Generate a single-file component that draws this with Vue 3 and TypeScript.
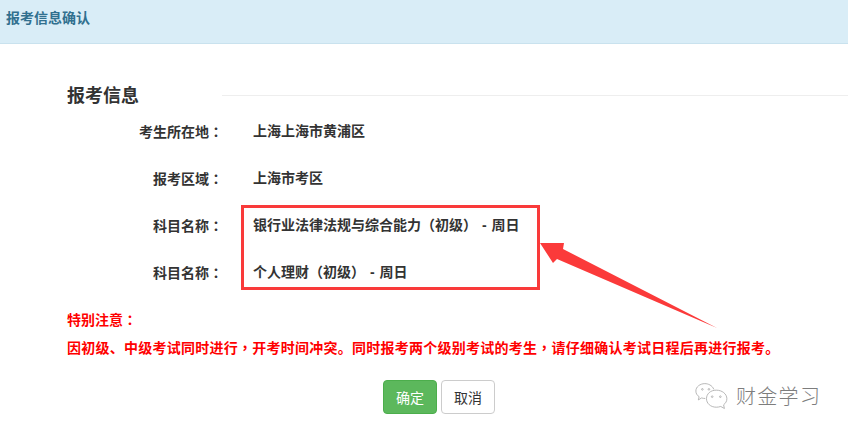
<script setup lang="ts">
const rows = [
  { label: '考生所在地', value: '上海上海市黄浦区' },
  { label: '报考区域', value: '上海市考区' },
  { label: '科目名称', value: '银行业法律法规与综合能力（初级） - 周日' },
  { label: '科目名称', value: '个人理财（初级） - 周日' },
]
</script>

<template>
  <div class="page">
    <header class="head">报考信息确认</header>
    <main class="body">
      <div class="title-row">
        <h4 class="title">报考信息</h4>
        <div class="rule"></div>
      </div>
      <div class="rows">
        <div v-for="(r, i) in rows" :key="i" class="row">
          <div class="label">{{ r.label }}<span class="mid">：</span></div>
          <div class="value">{{ r.value }}</div>
        </div>
      </div>
      <p class="note first">特别注意<span class="mid">：</span></p>
      <p class="note second">因初级、中级考试同时进行<span class="mid">，</span>开考时间冲突。同时报考两个级别考试的考生<span class="mid">，</span>请仔细确认考试日程后再进行报考。</p>
      <div class="actions">
        <button class="btn ok">确定</button>
        <button class="btn cancel">取消</button>
      </div>
    </main>

    <div class="mark-box"></div>
    <svg class="arrow" width="848" height="434" viewBox="0 0 848 434">
      <polygon points="540,243 564,243 563,249 717,328 557,259 553,263" fill="#fb3a3a" />
    </svg>

    <div class="wm">
      <svg width="36" height="31" viewBox="0 0 44 38" fill="none" stroke="#b0b0b0" stroke-width="1.100">
        <path d="M23 9C21 4 16 2 12 2 6 2 1 6 1 11c0 3 1.500 5.500 4 7l-1 4 4-2.500c1.500.5 3 .7 4.500.7" />
        <circle cx="9" cy="9" r="1" />
        <circle cx="17" cy="9" r="1" />
        <path d="M26 10c7 0 13 4.500 13 10.500 0 3-1.500 5.500-4 7.500l1 4.500-4.500-2.500c-1.800.6-3.600.9-5.500.9-7 0-12-4.800-12-10.400C14 14.500 19 10 26 10z" />
        <circle cx="21" cy="18" r="1" />
        <circle cx="31" cy="18" r="1" />
      </svg>
      <span class="wm-text">财金学习</span>
    </div>
  </div>
</template>

<style>
html, body { margin: 0; background: #fff; }
</style>

<style scoped>
.page {
  position: relative;
  width: 848px;
  height: 434px;
  overflow: hidden;
  background: #fff;
  font-family: "Liberation Sans", "Noto Sans CJK SC", sans-serif;
  color: #333;
}
.head {
  box-sizing: border-box;
  height: 44px;
  padding: 9px 6px 0;
  background: #d9edf7;
  border-bottom: 1px solid #c9e2ee;
  color: #31708f;
  font-size: 14px;
  font-weight: 700;
  line-height: 18px;
}
.body { padding: 36px 0 0 67px; }
.title-row { display: flex; align-items: center; height: 30px; }
.title {
  margin: 0;
  padding-top: 2px;
  width: 155px;
  flex: none;
  font-size: 18px;
  font-weight: 700;
  line-height: 30px;
}
.rule { flex: 1; height: 1px; background: #eee; }
.rows { margin-top: 11px; display: flex; flex-direction: column; gap: 27px; }
.row { display: flex; height: 20px; line-height: 20px; font-size: 14px; font-weight: 700; }
.label { width: 156px; flex: none; text-align: right; }
.value { margin-left: 30px; white-space: nowrap; word-spacing: 1px; }
.mid { font-family: "Noto Sans CJK TC", sans-serif; }
.note { margin: 0; color: #f00; font-size: 14px; font-weight: 700; line-height: 18px; white-space: nowrap; }
.first { margin-top: 28px; }
.second { margin-top: 9px; letter-spacing: 0.25px; }
.actions { display: flex; gap: 4px; margin: 23px 0 0 316px; }
.btn {
  box-sizing: border-box;
  width: 54px;
  height: 34px;
  padding: 0;
  border-radius: 4px;
  font: 14px "Liberation Sans", "Noto Sans CJK SC", sans-serif;
}
.ok { background: #5cb85c; border: 1px solid #4cae4c; color: #fff; }
.cancel { background: #fff; border: 1px solid #ccc; color: #333; }
.mark-box {
  position: absolute;
  left: 241px;
  top: 205px;
  width: 299px;
  height: 85px;
  box-sizing: border-box;
  border: 3px solid #f93a3a;
}
.arrow { position: absolute; left: 0; top: 0; pointer-events: none; }
.wm {
  position: absolute;
  left: 695px;
  top: 380px;
  display: flex;
  align-items: center;
  gap: 5px;
  color: #7d7d7d;
}
.wm-text { font-size: 20px; letter-spacing: 1.300px; line-height: 34px; font-weight: 300; }
</style>
